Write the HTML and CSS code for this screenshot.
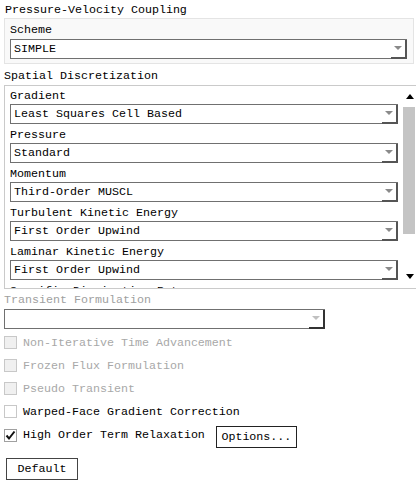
FILE: index.html
```html
<!DOCTYPE html>
<html>
<head>
<meta charset="utf-8">
<link rel="stylesheet" href="styles.css">
</head>
<body>
<div class="page">
  <div class="heading">Pressure-Velocity Coupling</div>
  <div class="group">
    <div class="label">Scheme</div>
    <div class="combo"><span class="combo-text">SIMPLE</span><span class="combo-btn"><i class="tri"></i></span></div>
  </div>
  <div class="heading h2">Spatial Discretization</div>
  <div class="panel">
    <div class="panel-content">
      <div class="label">Gradient</div>
      <div class="combo"><span class="combo-text">Least Squares Cell Based</span><span class="combo-btn"><i class="tri"></i></span></div>
      <div class="label">Pressure</div>
      <div class="combo"><span class="combo-text">Standard</span><span class="combo-btn"><i class="tri"></i></span></div>
      <div class="label">Momentum</div>
      <div class="combo"><span class="combo-text">Third-Order MUSCL</span><span class="combo-btn"><i class="tri"></i></span></div>
      <div class="label">Turbulent Kinetic Energy</div>
      <div class="combo"><span class="combo-text">First Order Upwind</span><span class="combo-btn"><i class="tri"></i></span></div>
      <div class="label">Laminar Kinetic Energy</div>
      <div class="combo"><span class="combo-text">First Order Upwind</span><span class="combo-btn"><i class="tri"></i></span></div>
      <div class="label">Specific Dissipation Rate</div>
      <div class="combo"><span class="combo-text">First Order Upwind</span><span class="combo-btn"><i class="tri"></i></span></div>
    </div>
    <div class="scrollbar">
      <div class="arrow up"></div>
      <div class="track"><div class="thumb"></div></div>
      <div class="arrow down"></div>
    </div>
  </div>
  <div class="heading h3 disabled">Transient Formulation</div>
  <div class="combo combo-disabled"><span class="combo-text"></span><span class="combo-btn"><i class="tri"></i></span></div>
  <div class="checks">
    <label class="check disabled"><span class="box"></span>Non-Iterative Time Advancement</label>
    <label class="check disabled"><span class="box"></span>Frozen Flux Formulation</label>
    <label class="check disabled"><span class="box"></span>Pseudo Transient</label>
    <label class="check"><span class="box"></span>Warped-Face Gradient Correction</label>
    <div class="check-row">
      <label class="check"><span class="box checked"><svg width="11" height="11" viewBox="0 0 11 11"><path d="M1.5 5.5 L4 8.5 L9.5 1.5" fill="none" stroke="#111" stroke-width="2"/></svg></span>High Order Term Relaxation</label>
      <button class="btn options">Options...</button>
    </div>
  </div>
  <button class="btn default">Default</button>
</div>
</body>
</html>
```

FILE: styles.css
```css
* { box-sizing: border-box; }
html, body { margin: 0; padding: 0; background: #fff; }
body {
  font-family: "Liberation Mono", "DejaVu Sans Mono", monospace;
  font-size: 11.67px;
  color: #000;
  width: 416px;
  height: 484px;
  overflow: hidden;
}
.page { display: flex; flex-direction: column; }
.heading { height: 18px; line-height: 16px; padding-left: 5px; padding-top: 2px; }
.h2 { padding-left: 4px; height: 21px; line-height: 17px; padding-top: 4px; }
.h3 { padding-left: 4px; height: 20px; line-height: 17px; padding-top: 3px; }
.disabled { color: #a0a0a0; }

.group {
  margin: 0 2px 0 4px;
  border: 1px solid #e4e4e4;
  background: #f9f9f9;
  padding: 1px 6px 5px 5px;
  height: 46px;
}
.label { height: 18px; line-height: 16px; padding-top: 2px; }

.combo {
  display: flex;
  height: 20px;
  border: 1px solid #707070;
  background: #fff;
  margin-top: 1px;
}
.combo-text { flex: 1; padding-left: 3px; line-height: 18px; white-space: nowrap; overflow: hidden; }
.combo-btn {
  width: 16px;
  border-right: 2px solid #555;
  border-bottom: 2px solid #555;
  display: flex;
  align-items: center;
  justify-content: center;
  margin-right: -1px;
  margin-bottom: -1px;
}
.tri {
  width: 0; height: 0;
  border-left: 4px solid transparent;
  border-right: 4px solid transparent;
  border-top: 4px solid #8a8a8a;
  margin-top: -1px;
}

.panel {
  display: flex;
  margin-left: 4px;
  height: 204px;
  border: 1px solid #cacaca;
  border-right: none;
  overflow: hidden;
}
.panel-content { flex: 1; padding: 0 5px 0 5px; overflow: hidden; }
.panel-content .label { height: 18px; padding-top: 2px; line-height: 16px; }
.panel-content .combo { margin-top: 0; margin-bottom: 1px; }
.scrollbar { width: 13px; display: flex; flex-direction: column; background: #fff; }
.arrow { height: 16px; display: flex; align-items: center; justify-content: center; }
.arrow.up::before {
  content: ""; width: 0; height: 0;
  border-left: 4px solid transparent; border-right: 4px solid transparent;
  border-bottom: 5px solid #000;
}
.arrow.down::before {
  content: ""; width: 0; height: 0;
  border-left: 4px solid transparent; border-right: 4px solid transparent;
  border-top: 5px solid #000;
}
.arrow.up { height: 21px; }
.arrow.down { height: 18px; align-items: flex-start; padding-top: 4px; }
.track { flex: 1; padding: 0 1px 0 0; }
.thumb { height: 127px; background: #c4c4c4; }

.combo-disabled { margin-left: 4px; margin-top: 0; width: 321px; border-color: #707070; }
.combo-disabled .tri { border-top-color: #c0c0c0; }
.combo-disabled .combo-btn { border-right-color: #333; border-bottom-color: #333; }

.checks { display: flex; flex-direction: column; padding-left: 4px; margin-top: 2px; }
.check { display: flex; align-items: center; height: 23px; gap: 6px; }
.check.disabled { color: #a8a8a8; }
.box { width: 13px; height: 13px; border: 1px solid #c8c8c8; background: #fff; display: flex; align-items: center; justify-content: center; }
.check.disabled .box { background: #f0f0f0; }
.box.checked { border-color: #a0a0a0; }
.check-row { display: flex; align-items: center; height: 24px; }
.btn {
  font-family: inherit;
  font-size: 11.67px;
  color: #000;
  background: #fff;
  border: 1px solid #222;
  padding: 0;
  height: 22px;
}
.options { width: 81px; margin-left: 11px; margin-top: 4px; }
.default { width: 72px; margin-left: 6px; margin-top: 11px; border-color: #444; }
```
